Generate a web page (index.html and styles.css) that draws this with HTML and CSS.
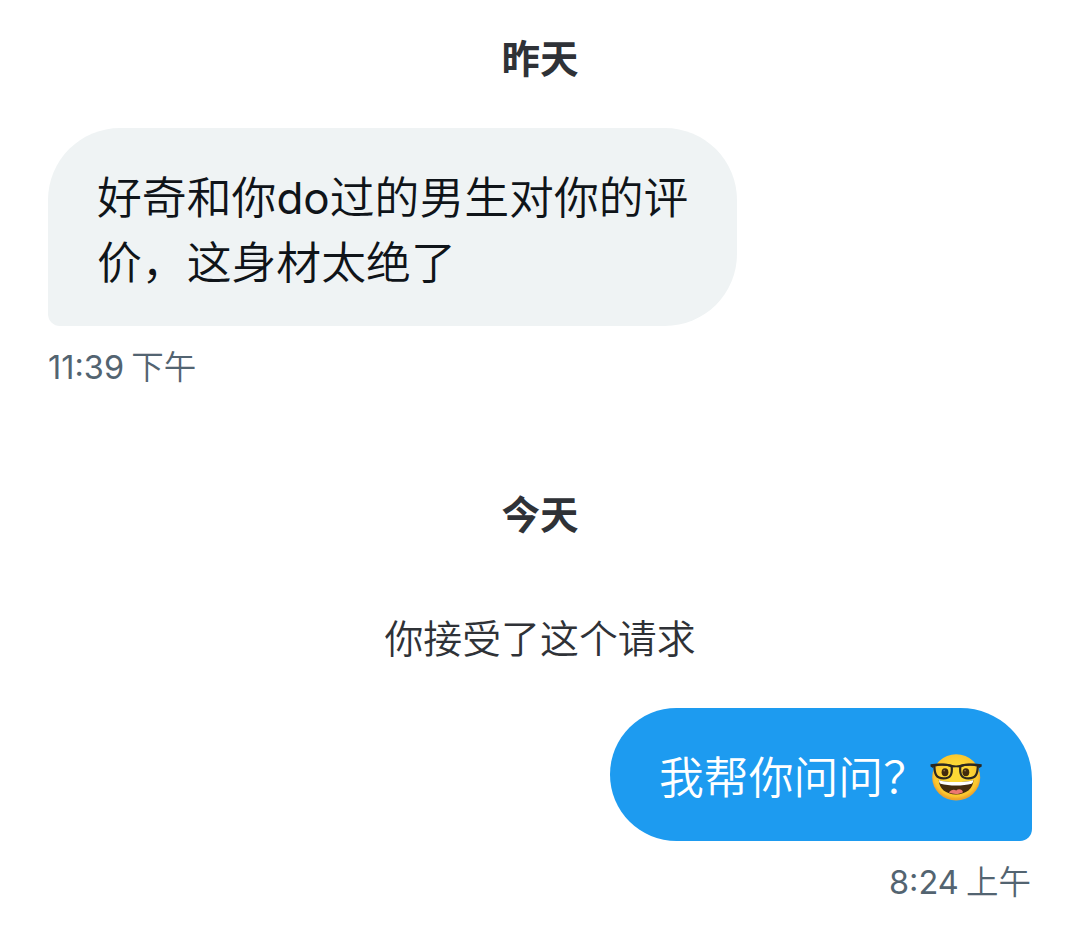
FILE: index.html
```
<!DOCTYPE html>
<html lang="zh-CN">
<head>
    <meta charset="UTF-8">
    <meta name="viewport" content="width=device-width, initial-scale=1.0">
    <title>私信</title>
    <link rel="stylesheet" href="styles.css">
</head>
<body>
    <main class="chat">
        <h2 class="day">昨天</h2>
        <div class="message received">
            <div class="bubble">好奇和你<span class="latin">do</span>过的男生对你的评价，这身材太绝了</div>
            <div class="time"><span class="digits">11:39</span> 下午</div>
        </div>

        <h2 class="day today">今天</h2>
        <p class="notice">你接受了这个请求</p>
        <div class="message sent">
            <div class="bubble">
                <span>我帮你问问？</span>
                <svg class="emoji" viewBox="0 0 52 48" role="img" aria-label="书呆子表情">
                    <defs>
                        <radialGradient id="face" cx="50%" cy="45%" r="52%">
                            <stop offset="0.5" stop-color="#fdd835"/>
                            <stop offset="0.88" stop-color="#fbc62f"/>
                            <stop offset="1" stop-color="#eda42c"/>
                        </radialGradient>
                    </defs>
                    <ellipse cx="26.2" cy="23.4" rx="24" ry="23.1" fill="url(#face)"/>
                    <!-- mouth -->
                    <path d="M8.8 26C14 28.8 38 28.8 43.4 26C43.4 34.5 36 40.4 26 40.4S8.8 34.5 8.8 26Z" fill="#422b0d"/>
                    <path d="M9 26C14 28.7 38 28.7 43.2 26C43.2 28 42.6 29.2 41.6 29.8C33 32.2 19 32.2 10.6 29.8C9.6 29.2 9 28 9 26Z" fill="#fff"/>
                    <path d="M18.8 38.6C20.5 35.8 24 35 26.2 36.4C28.4 34.2 32.5 35 33 38.2C29.5 40.4 23 40.6 18.8 38.6Z" fill="#ed7770"/>
                    <!-- eyes -->
                    <ellipse cx="15" cy="18.3" rx="3.4" ry="4" fill="#422b0d"/>
                    <ellipse cx="35.9" cy="18.3" rx="3.4" ry="4" fill="#422b0d"/>
                    <circle cx="14.2" cy="16.6" r="0.9" fill="#8a6a3a"/>
                    <circle cx="35.1" cy="16.6" r="0.9" fill="#8a6a3a"/>
                    <!-- glasses -->
                    <path d="M4.4 11.6C8 10.4 17 10.4 21.6 12C22.6 20 20.8 24.4 13.5 24.4C6.2 24.4 4.4 20 4.4 11.6ZM47.8 11.6C44 10.4 35 10.4 30.4 12C29.4 20 31.2 24.4 38.5 24.4C45.8 24.4 47.8 20 47.8 11.6Z" fill="none" stroke="#2c2820" stroke-width="2.2"/>
                    <path d="M0.5 10.2C7 9.2 17 9.2 22.4 11Q26 11.9 29.8 11C35 9.2 45 9.2 51.7 10.2V12.6L49.2 14L47.6 11.6C42 10.8 35 11 30.6 13.6Q26 12.8 21.6 13.6C17 11 10 10.8 4.6 11.6L3 14L0.5 12.6Z" fill="#2c2820"/>
                </svg>
            </div>
            <div class="time"><span class="digits">8:24</span> 上午</div>
        </div>
    </main>
</body>
</html>
```
FILE: styles.css
```
* {
    margin: 0;
    padding: 0;
    box-sizing: border-box;
}
body {
    background-color: #fff;
    font-family: 'Noto Sans CJK SC', sans-serif;
    font-weight: 350;
    color: #0f1419;
}
.chat {
    display: flex;
    flex-direction: column;
    padding: 27px 47px 0 48px;
}
.day {
    font-size: 38.5px;
    line-height: 58px;
    font-weight: 700;
    text-align: center;
    color: #2f3237;
}
.message {
    display: flex;
    flex-direction: column;
}
.bubble {
    font-size: 44.85px;
    line-height: 65px;
}
.received {
    align-items: flex-start;
    margin-top: 43px;
}
.received .bubble {
    width: 689px;
    height: 198px;
    padding: 34px 44px 34px 49px;
    background-color: #eff3f4;
    border-radius: 72px 72px 72px 12px;
}
.latin, .digits {
    font-family: 'Inter', sans-serif;
    font-weight: 400;
    line-height: 1;
}
.latin {
    font-size: 44px;
}
.time {
    height: 48px;
    margin-top: 15px;
    font-size: 32.5px;
    line-height: 48px;
    color: #536471;
}
.today {
    margin-top: 94px;
}
.notice {
    margin-top: 66px;
    font-size: 38.9px;
    line-height: 58px;
    text-align: center;
    color: #2f3237;
}
.sent {
    align-items: flex-end;
    margin-top: 43px;
}
.sent .bubble {
    display: flex;
    width: 422px;
    height: 133px;
    padding: 34px 47px 34px 49px;
    background-color: #1d9bf0;
    border-radius: 67px 72px 12px 67px;
    color: #fff;
}
.sent .time {
    padding-right: 1px;
}
.emoji {
    width: 52px;
    height: 48px;
    margin: 12px 0 0 2px;
}
```
